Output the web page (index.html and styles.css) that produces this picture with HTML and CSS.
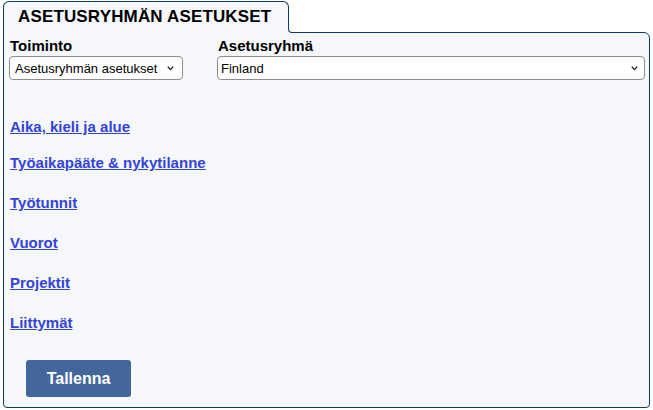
FILE: index.html
```html
<!DOCTYPE html>
<html>
<head>
	<title>Asetusryhmän asetukset</title>
	<meta http-equiv="Content-Type" content="text/html; charset=UTF-8">
	<link rel="stylesheet" href="styles.css">
</head>
<body>
	<div class="settings">
		<div class="tab">ASETUSRYHMÄN ASETUKSET</div>
		<div class="panel">
			<div class="filters">
				<div class="field">
					<label class="field-label" for="action">Toiminto</label>
					<div class="select-wrap action-wrap">
						<select id="action" class="action-select">
							<option>Asetusryhmän asetukset</option>
						</select>
						<svg class="chevron" width="7" height="5" viewBox="0 0 7 5"><path d="M0.8 0.8 L3.5 3.6 L6.2 0.8" fill="none" stroke="#222" stroke-width="1.3"/></svg>
					</div>
				</div>
				<div class="field">
					<label class="field-label" for="group">Asetusryhmä</label>
					<div class="select-wrap group-wrap">
						<select id="group" class="group-select">
							<option>Finland</option>
						</select>
						<svg class="chevron" width="7" height="5" viewBox="0 0 7 5"><path d="M0.8 0.8 L3.5 3.6 L6.2 0.8" fill="none" stroke="#222" stroke-width="1.3"/></svg>
					</div>
				</div>
			</div>
			<div class="sections">
				<a href="#">Aika, kieli ja alue</a>
				<a href="#">Työaikapääte &amp; nykytilanne</a>
				<a href="#">Työtunnit</a>
				<a href="#">Vuorot</a>
				<a href="#">Projektit</a>
				<a href="#">Liittymät</a>
			</div>
			<button type="button" class="save">Tallenna</button>
		</div>
	</div>
</body>
</html>
```

FILE: styles.css
```css
body {
	margin: 0;
	background: #ffffff;
	font-family: "Liberation Sans", Arial, sans-serif;
	color: #000000;
}
.settings {
	padding: 1px 3px 0 3px;
}
.tab {
	position: relative;
	z-index: 1;
	display: inline-block;
	width: 286px;
	box-sizing: border-box;
	margin-bottom: -1px;
	padding: 5px 0 6px 14px;
	font-size: 17px;
	line-height: 20px;
	font-weight: bold;
	letter-spacing: 0.15px;
	background: #f5f7fb;
	border: 1px solid #0e3a6b;
	border-bottom: none;
	border-radius: 6px 6px 0 0;
}
/* rounded join between tab and panel top */
.tab::before, .tab::after {
	content: "";
	position: absolute;
	left: 100%;
	bottom: 0;
	width: 6px;
	height: 6px;
	box-sizing: border-box;
}
.tab::before {
	background: #f5f7fb;
}
.tab::after {
	background: #ffffff;
	border-left: 1px solid #0e3a6b;
	border-bottom: 1px solid #0e3a6b;
	border-bottom-left-radius: 4px;
}
.panel {
	background: #f5f7fb;
	border: 1px solid #0e3a6b;
	border-radius: 0 6px 4px 4px;
	padding: 5px 4px 10px 5px;
}
.filters {
	display: grid;
	grid-template-columns: 174px 1fr;
	column-gap: 34px;
}
.field {
	display: flex;
	flex-direction: column;
	row-gap: 2px;
}
.field-label {
	font-size: 15px;
	line-height: 16px;
	font-weight: bold;
	padding-left: 1px;
}
.select-wrap {
	position: relative;
	display: flex;
}
select {
	-webkit-appearance: none;
	appearance: none;
	width: 100%;
	height: 24px;
	font-family: "Liberation Sans", Arial, sans-serif;
	font-size: 13px;
	color: #000000;
	background: #ffffff;
	border: 1px solid #8d8d8d;
	border-radius: 4px;
}
.action-select {
	padding: 0 20px 0 5px;
}
.group-select {
	padding: 0 20px 0 3px;
}
.chevron {
	position: absolute;
	top: 10px;
	pointer-events: none;
}
.action-wrap .chevron {
	right: 9px;
}
.group-wrap .chevron {
	right: 7px;
}
.sections {
	margin-top: 39px;
	display: flex;
	flex-direction: column;
	align-items: flex-start;
	row-gap: 24px;
	padding-left: 1px;
}
.sections a {
	font-size: 15px;
	line-height: 16px;
	font-weight: bold;
	color: #3344d8;
}
.sections a:first-child {
	margin-bottom: -4px;
}
.save {
	margin: 29px 0 0 17px;
	width: 105px;
	height: 37px;
	border: none;
	border-radius: 3px;
	background: #44679b;
	color: #ffffff;
	font-family: "Liberation Sans", Arial, sans-serif;
	font-size: 16px;
	font-weight: bold;
}
```
